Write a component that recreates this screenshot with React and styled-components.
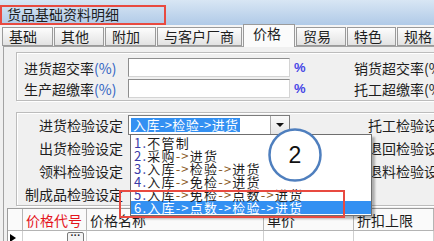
import styled, { createGlobalStyle } from "styled-components";

const FONT = `"Noto Sans CJK SC", "Liberation Sans", sans-serif`;

const Global = createGlobalStyle`
  html, body { margin: 0; padding: 0; background: #f0f0f0; }
  body { font-family: ${FONT}; }
`;

const Window = styled.div`
  position: relative;
  width: 434px;
  height: 241px;
  overflow: hidden;
  display: flex;
  flex-direction: column;
  background: #f0f0f0;
  font-family: ${FONT};
  color: #1e1e1e;
`;

const TitleBar = styled.div`
  flex: none;
  height: 25px;
  box-sizing: border-box;
  padding-top: 5px;
  background: linear-gradient(#d8e6f4, #b0cae7);
`;

const TitleText = styled.div`
  box-sizing: border-box;
  width: 166px;
  height: 20px;
  border: 2px solid #e84a40;
  padding-left: 5px;
  font-size: 14px;
  line-height: 15px;
`;

const TabStrip = styled.div`
  flex: none;
  position: relative;
  z-index: 2;
  height: 21px;
  display: flex;
  align-items: flex-end;
  gap: 1px;
  padding-left: 2px;
  background: #f4f4f4;
`;

const Tab = styled.div`
  flex: none;
  box-sizing: border-box;
  width: ${(p) => p.$w}px;
  height: ${(p) => (p.$active ? 23 : 19)}px;
  margin-bottom: ${(p) => (p.$active ? -1 : 0)}px;
  padding-left: ${(p) => (p.$active ? 9 : 6)}px;
  border: 1px solid #9a9a9a;
  border-bottom: ${(p) => (p.$active ? "none" : "1px solid #9a9a9a")};
  background: ${(p) =>
    p.$active ? "#fbfbfb" : "linear-gradient(#fdfdfd, #e2e2e2)"};
  font-size: 14px;
  line-height: 17px;
  white-space: nowrap;
`;

const Panel = styled.div`
  flex: 1;
  min-height: 0;
  margin-left: 3px;
  padding-top: 5px;
  border-left: 1px solid #a3a3a3;
  border-top: 1px solid #a3a3a3;
  background: #f0f0f0;
  display: flex;
  flex-direction: column;
`;

const GroupBox = styled.div`
  flex: none;
  width: 440px;
  margin: ${(p) => p.$top || 0}px 0 0 12px;
  border: 1px solid #bcbcbc;
  box-shadow: inset 1px 1px 0 #ffffff, 1px 1px 0 #ffffff;
  display: grid;
  grid-template-columns: ${(p) => p.$cols};
  grid-auto-rows: ${(p) => p.$row}px;
  row-gap: ${(p) => p.$gap || 0}px;
  align-items: center;
  padding: ${(p) => p.$pad};
  font-size: 14px;
  white-space: nowrap;
`;

const Label = styled.div`
  text-align: ${(p) => (p.$right ? "right" : "left")};
  padding-right: ${(p) => (p.$right ? 5 : 0)}px;
  line-height: 16px;
`;

const Blue = styled.span`
  color: #2f62c2;
`;

const Field = styled.div`
  box-sizing: border-box;
  height: 19px;
  background: #fff;
  border: 1px solid #8e8e8e;
  border-right-color: #d4d4d4;
  border-bottom-color: #d4d4d4;
`;

const Pct = styled.div`
  padding-left: 4px;
  color: #4646e6;
  font-family: "Liberation Sans", sans-serif;
  font-weight: bold;
  font-size: 13px;
`;

const Combo = styled.div`
  position: relative;
  box-sizing: border-box;
  height: 20px;
  background: #fff;
  border: 1px solid #7c7c7c;
  display: flex;
  align-items: center;
  padding-left: 2px;
`;

const ComboValue = styled.span`
  flex: none;
  height: 14px;
  line-height: 14px;
  padding: 0 2px;
  background: #3390f2;
  color: #fff;
  font-size: 13px;
  letter-spacing: 0.4px;
`;

const ComboButton = styled.div`
  margin-left: auto;
  box-sizing: border-box;
  width: 19px;
  height: 18px;
  border-left: 1px solid #a8a8a8;
  background: linear-gradient(#fafafa, #e6e6e6);
  display: flex;
  align-items: center;
  justify-content: center;
  &::after {
    content: "";
    border-left: 4px solid transparent;
    border-right: 4px solid transparent;
    border-top: 4px solid #111;
  }
`;

const DropList = styled.div`
  position: absolute;
  z-index: 3;
  top: 100%;
  left: 1px;
  width: 242px;
  box-sizing: border-box;
  padding: 1px 0;
  background: #fff;
  border: 1px solid #6f6f6f;
  box-shadow: 3px 3px 2px rgba(0, 0, 0, 0.28);
`;

const Option = styled.div`
  height: 13px;
  line-height: 13px;
  padding-left: 3px;
  font-size: 13px;
  letter-spacing: 1.2px;
  background: ${(p) => (p.$selected ? "#3390f2" : "transparent")};
  color: ${(p) => (p.$selected ? "#fff" : "#1e1e1e")};
`;

const Arrow = styled.span`
  color: ${(p) => (p.$selected ? "#fff" : "#8a5a1e")};
`;

const Num = styled.span`
  color: ${(p) => (p.$selected ? "#fff" : "#3a3aa8")};
`;

const Grid = styled.div`
  flex: 1;
  margin: 2px 0 0 3px;
  border-left: 1px solid #9c9c9c;
  border-top: 1px solid #9c9c9c;
  background: #fff;
  display: grid;
  grid-template-columns: 15px 64px 177px 90px 1fr;
  grid-template-rows: 22px 1fr;
  font-size: 14px;
`;

const HeadCell = styled.div`
  border-right: 1px solid #b4b4b4;
  border-bottom: 1px solid #b4b4b4;
  background: #fafafa;
  padding-left: 3px;
  line-height: 22px;
  color: ${(p) => (p.$red ? "#e4141c" : "#1e1e1e")};
  white-space: nowrap;
`;

const Cell = styled.div`
  border-right: 1px solid #d0d0d0;
  display: flex;
  align-items: flex-start;
  justify-content: ${(p) => (p.$end ? "flex-end" : "flex-start")};
  padding: 1px 2px 0 2px;
`;

const RowMark = styled.span`
  margin-top: 2px;
  border-top: 4px solid transparent;
  border-bottom: 4px solid transparent;
  border-left: 6px solid #000;
`;

const Ellipsis = styled.div`
  box-sizing: border-box;
  width: 17px;
  height: 13px;
  border: 1px solid #7a7a7a;
  border-radius: 2px;
  background: #f4f4f4;
  font-size: 10px;
  line-height: 6px;
  text-align: center;
  font-family: "Liberation Sans", sans-serif;
  font-weight: bold;
`;

const Mark = styled.div`
  position: absolute;
  z-index: 5;
  left: 119px;
  top: 190px;
  width: 226px;
  height: 28px;
  box-sizing: border-box;
  border: 2px solid #e84a40;
`;

const Bubble = styled.svg`
  position: absolute;
  z-index: 4;
  left: 267px;
  top: 127px;
`;

const tabs = [
  ["基础", 51],
  ["其他", 50],
  ["附加", 51],
  ["与客户厂商", 85],
  ["价格", 52, true],
  ["贸易", 50],
  ["特色", 49],
  ["规格", 50],
];

const options = [
  ["1", ["不管制"]],
  ["2", ["采购", "进货"]],
  ["3", ["入库", "检验", "进货"]],
  ["4", ["入库", "免检", "进货"]],
  ["5", ["入库", "免检", "点数", "进货"]],
  ["6", ["入库", "点数", "检验", "进货"]],
];

const OptionText = ({ n, parts, selected }) => (
  <Option $selected={selected}>
    <Num $selected={selected}>{n}.</Num>
    {parts.map((p, i) => (
      <span key={i}>
        {i > 0 && <Arrow $selected={selected}>-&gt;</Arrow>}
        {p}
      </span>
    ))}
  </Option>
);

export default function App() {
  return (
    <Window>
      <Global />
      <TitleBar>
        <TitleText>货品基础资料明细</TitleText>
      </TitleBar>
      <TabStrip>
        {tabs.map(([t, w, a]) => (
          <Tab key={t} $w={w} $active={a}>
            {t}
          </Tab>
        ))}
      </TabStrip>
      <Panel>
        <GroupBox
          $cols="104px 162px 64px 1fr"
          $row={19}
          $gap={2}
          $pad="5px 0 2px 7px"
        >
          <Label>
            进货超交率<Blue>(%)</Blue>
          </Label>
          <Field />
          <Pct>%</Pct>
          <Label>销货超交率(%)</Label>
          <Label>
            生产超缴率<Blue>(%)</Blue>
          </Label>
          <Field />
          <Pct>%</Pct>
          <Label>托工超缴率(%)</Label>
        </GroupBox>

        <GroupBox $top={11} $cols="111px 162px 78px 1fr" $row={23} $pad="0">
          <Label $right>进货检验设定</Label>
          <Combo>
            <ComboValue>入库-&gt;检验-&gt;进货</ComboValue>
            <ComboButton />
            <DropList>
              {options.map(([n, parts]) => (
                <OptionText key={n} n={n} parts={parts} selected={n === "6"} />
              ))}
            </DropList>
          </Combo>
          <span />
          <Label>托工检验设定</Label>
          <Label $right>出货检验设定</Label>
          <span />
          <span />
          <Label>退回检验设定</Label>
          <Label $right>领料检验设定</Label>
          <span />
          <span />
          <Label>退料检验设定</Label>
          <Label $right>制成品检验设定</Label>
          <span />
          <span />
          <span />
        </GroupBox>

        <Grid>
          <HeadCell />
          <HeadCell $red>价格代号</HeadCell>
          <HeadCell>价格名称</HeadCell>
          <HeadCell>单价</HeadCell>
          <HeadCell>折扣上限</HeadCell>
          <Cell>
            <RowMark />
          </Cell>
          <Cell $end>
            <Ellipsis>···</Ellipsis>
          </Cell>
          <Cell />
          <Cell />
          <Cell />
        </Grid>
      </Panel>

      <Bubble width="56" height="56" viewBox="0 0 56 56">
        <circle cx="28" cy="28" r="25.5" fill="#fff" stroke="#4f7fbe" strokeWidth="2.5" />
        <text
          x="28"
          y="36"
          textAnchor="middle"
          fontSize="23"
          fontFamily="Liberation Sans, sans-serif"
          fill="#111"
        >
          2
        </text>
      </Bubble>
      <Mark />
    </Window>
  );
}
